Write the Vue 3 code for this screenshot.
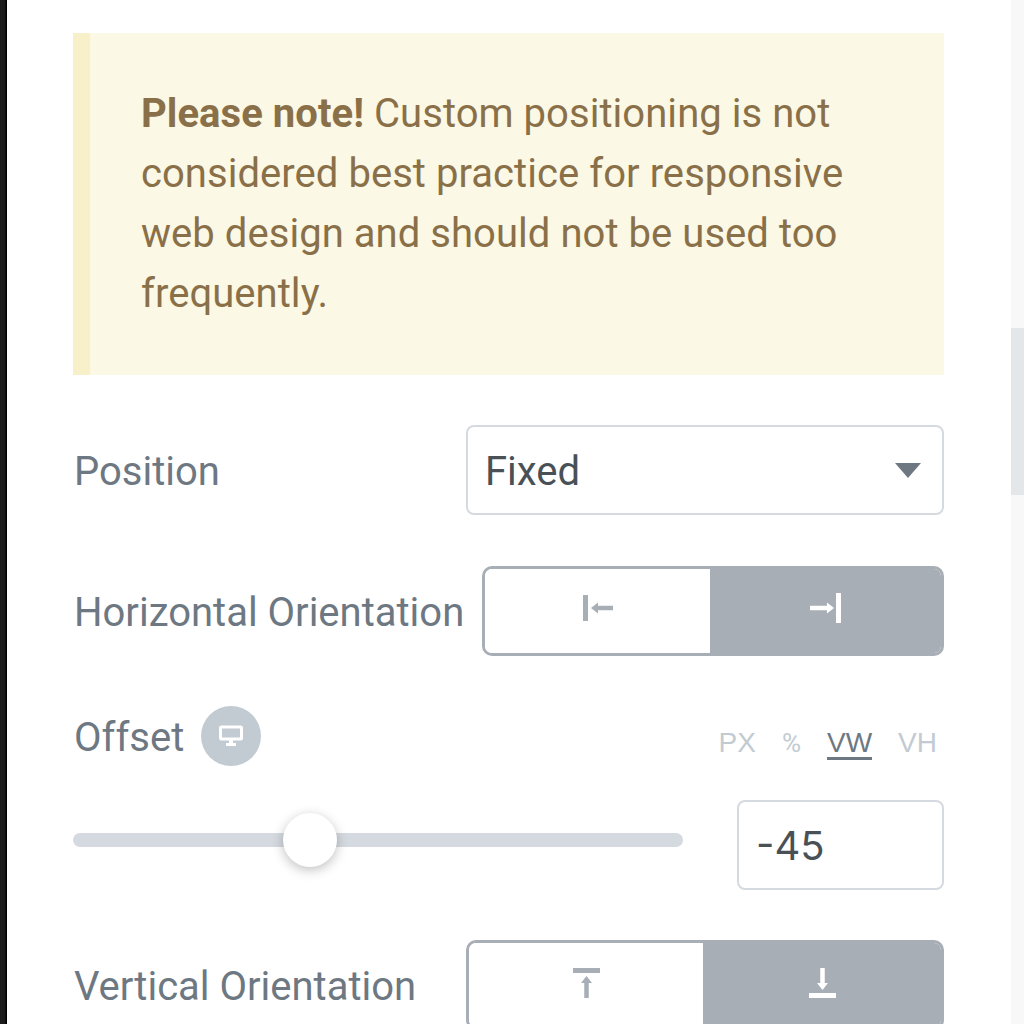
<template>
  <div class="screen">
    <div class="edge"></div>
    <main class="panel">
      <div class="notice">
        <p><strong>Please note!</strong> Custom positioning is not considered best practice for responsive web design and should not be used too frequently.</p>
      </div>

      <div class="row row-position">
        <label class="label">Position</label>
        <div class="select">
          <span>Fixed</span>
          <i class="caret"></i>
        </div>
      </div>

      <div class="row row-horizontal">
        <label class="label">Horizontal Orientation</label>
        <div class="toggle toggle-h">
          <button type="button" class="choice">
            <svg width="30" height="30" viewBox="0 0 30 30" fill="none">
              <path d="M2.500 2v26" stroke="currentColor" stroke-width="5" />
              <path d="M12 15h18" stroke="currentColor" stroke-width="4.500" />
              <path d="M15 9.500l-7 5.500 7 5.500z" fill="currentColor" />
            </svg>
          </button>
          <button type="button" class="choice active">
            <svg width="31" height="30" viewBox="0 0 31 30" fill="none">
              <path d="M28.500 0v30" stroke="currentColor" stroke-width="5" />
              <path d="M0 15h19" stroke="currentColor" stroke-width="4.500" />
              <path d="M17 9.500l7 5.500-7 5.500z" fill="currentColor" />
            </svg>
          </button>
        </div>
      </div>

      <div class="offset-head">
        <label class="label">Offset</label>
        <span class="device">
          <svg width="26" height="22" viewBox="0 0 26 22" fill="none">
            <rect x="2.500" y="2" width="21" height="12" rx="1" stroke="#fff" stroke-width="3" />
            <path d="M11 14h4v4h-4z" fill="#fff" />
            <path d="M8 18h10v3H8z" fill="#fff" />
          </svg>
        </span>
        <div class="units">
          <span
            v-for="unit in units"
            :key="unit"
            class="unit"
            :class="{ current: unit === 'VW', percent: unit === '%' }"
          >{{ unit }}</span>
        </div>
      </div>

      <div class="slider-row">
        <div class="slider">
          <div class="track"></div>
          <div class="thumb"></div>
        </div>
        <div class="number">-45</div>
      </div>

      <div class="row row-vertical">
        <label class="label">Vertical Orientation</label>
        <div class="toggle toggle-v">
          <button type="button" class="choice">
            <svg width="27" height="30" viewBox="0 0 27 30" fill="none">
              <path d="M0 2.500h27" stroke="currentColor" stroke-width="5" />
              <path d="M13.500 12v18" stroke="currentColor" stroke-width="4.500" />
              <path d="M8 15l5.500-7 5.500 7z" fill="currentColor" />
            </svg>
          </button>
          <button type="button" class="choice active">
            <svg width="27" height="30" viewBox="0 0 27 30" fill="none">
              <path d="M13.500 0v18" stroke="currentColor" stroke-width="4.500" />
              <path d="M8 15l5.500 7 5.500-7z" fill="currentColor" />
              <path d="M0 27.500h27" stroke="currentColor" stroke-width="5" />
            </svg>
          </button>
        </div>
      </div>
    </main>
    <aside class="gutter">
      <div class="thumb-bar"></div>
    </aside>
  </div>
</template>

<script setup>
const units = ['PX', '%', 'VW', 'VH']
</script>

<style scoped>
.screen {
  display: flex;
  width: 1024px;
  height: 1024px;
  overflow: hidden;
  background: #fff;
  font-family: Roboto, "Liberation Sans", sans-serif;
}

.edge {
  flex: 0 0 7px;
  background: linear-gradient(90deg, #1c1c1c 0, #1c1c1c 5px, #000 6px, #000 7px);
}

.panel {
  flex: 1 1 auto;
  min-width: 0;
  padding: 33px 67px 0 66px;
  box-shadow: 0 0 4px rgba(0, 0, 0, 0.08);
}

.notice {
  height: 342px;
  box-sizing: border-box;
  padding: 51px 60px 0 51px;
  background: #fbf8e5;
  border-left: 17px solid #f8f0c9;
  color: #8a7048;
  font-size: 40px;
  letter-spacing: 0.05px;
  line-height: 60px;
}

.notice p {
  margin: 0;
}

.row {
  display: flex;
  align-items: center;
  justify-content: space-between;
}

.row-position {
  margin-top: 50px;
}

.row-horizontal {
  margin-top: 51px;
}

.row-vertical {
  margin-top: 50px;
}

.label {
  padding: 3px 0 0 1px;
  color: #6d7882;
  font-size: 40px;
  line-height: 46px;
  white-space: nowrap;
}

.select {
  display: flex;
  align-items: center;
  justify-content: space-between;
  box-sizing: border-box;
  width: 478px;
  height: 90px;
  padding: 2px 21px 0 17px;
  border: 2px solid #d5dae0;
  border-radius: 8px;
  color: #495157;
  font-size: 40px;
}

.caret {
  width: 0;
  height: 0;
  margin-bottom: 2px;
  border-left: 13px solid transparent;
  border-right: 13px solid transparent;
  border-top: 15px solid #6d7882;
}

.toggle {
  display: flex;
  box-sizing: border-box;
  height: 90px;
  border: 3px solid #a7aeb5;
  border-radius: 10px;
  overflow: hidden;
}

.toggle-h {
  width: 462px;
}

.toggle-v {
  width: 478px;
}

.choice {
  flex: 1 1 50%;
  display: flex;
  align-items: center;
  justify-content: center;
  margin: 0;
  padding: 0 0 6px;
  border: 0;
  background: #fff;
  color: #a7aeb5;
}

.choice.active {
  background: #a7aeb5;
  color: #fff;
}

.toggle-h .choice:first-child {
  flex: 0 0 225px;
}

.toggle-v .choice {
  padding-bottom: 4px;
}

.toggle-v .choice:first-child {
  flex: 0 0 234px;
}

.offset-head {
  display: flex;
  align-items: center;
  height: 60px;
  margin-top: 50px;
}

.device {
  display: grid;
  place-items: center;
  width: 60px;
  height: 60px;
  margin-left: 17px;
  border-radius: 50%;
  background: #c2cbd2;
}

.units {
  display: flex;
  align-self: flex-start;
  gap: 26px;
  margin-left: auto;
  margin-right: 7px;
  padding-top: 24px;
}

.unit {
  padding-bottom: 1px;
  border-bottom: 3px solid transparent;
  color: #c2cbd2;
  font-family: "Liberation Sans", Arial, sans-serif;
  font-size: 28px;
  line-height: 26px;
}

.unit.percent {
  font-family: Roboto, "Liberation Sans", sans-serif;
  font-size: 26px;
}

.unit.current {
  border-bottom-color: #6d7882;
  color: #6d7882;
}

.slider-row {
  display: flex;
  align-items: center;
  justify-content: space-between;
  margin-top: 34px;
}

.slider {
  position: relative;
  width: 610px;
  height: 14px;
  margin-bottom: 10px;
}

.track {
  height: 14px;
  border-radius: 7px;
  background: #d5dae0;
}

.thumb {
  position: absolute;
  left: 210px;
  top: -20px;
  width: 54px;
  height: 54px;
  border-radius: 50%;
  background: #fff;
  box-shadow: 0 3px 12px rgba(0, 0, 0, 0.25);
}

.number {
  box-sizing: border-box;
  width: 207px;
  height: 90px;
  padding-left: 17px;
  border: 2px solid #d5dae0;
  border-radius: 8px;
  color: #495157;
  font-family: Inter, "Liberation Sans", sans-serif;
  font-size: 40px;
  line-height: 88px;
}

.gutter {
  flex: 0 0 13px;
  padding-top: 328px;
  background: #f8f8f8;
}

.thumb-bar {
  height: 167px;
  background: #e4e7ea;
}
</style>

<style>
html, body {
  margin: 0;
  background: #fff;
}
</style>
